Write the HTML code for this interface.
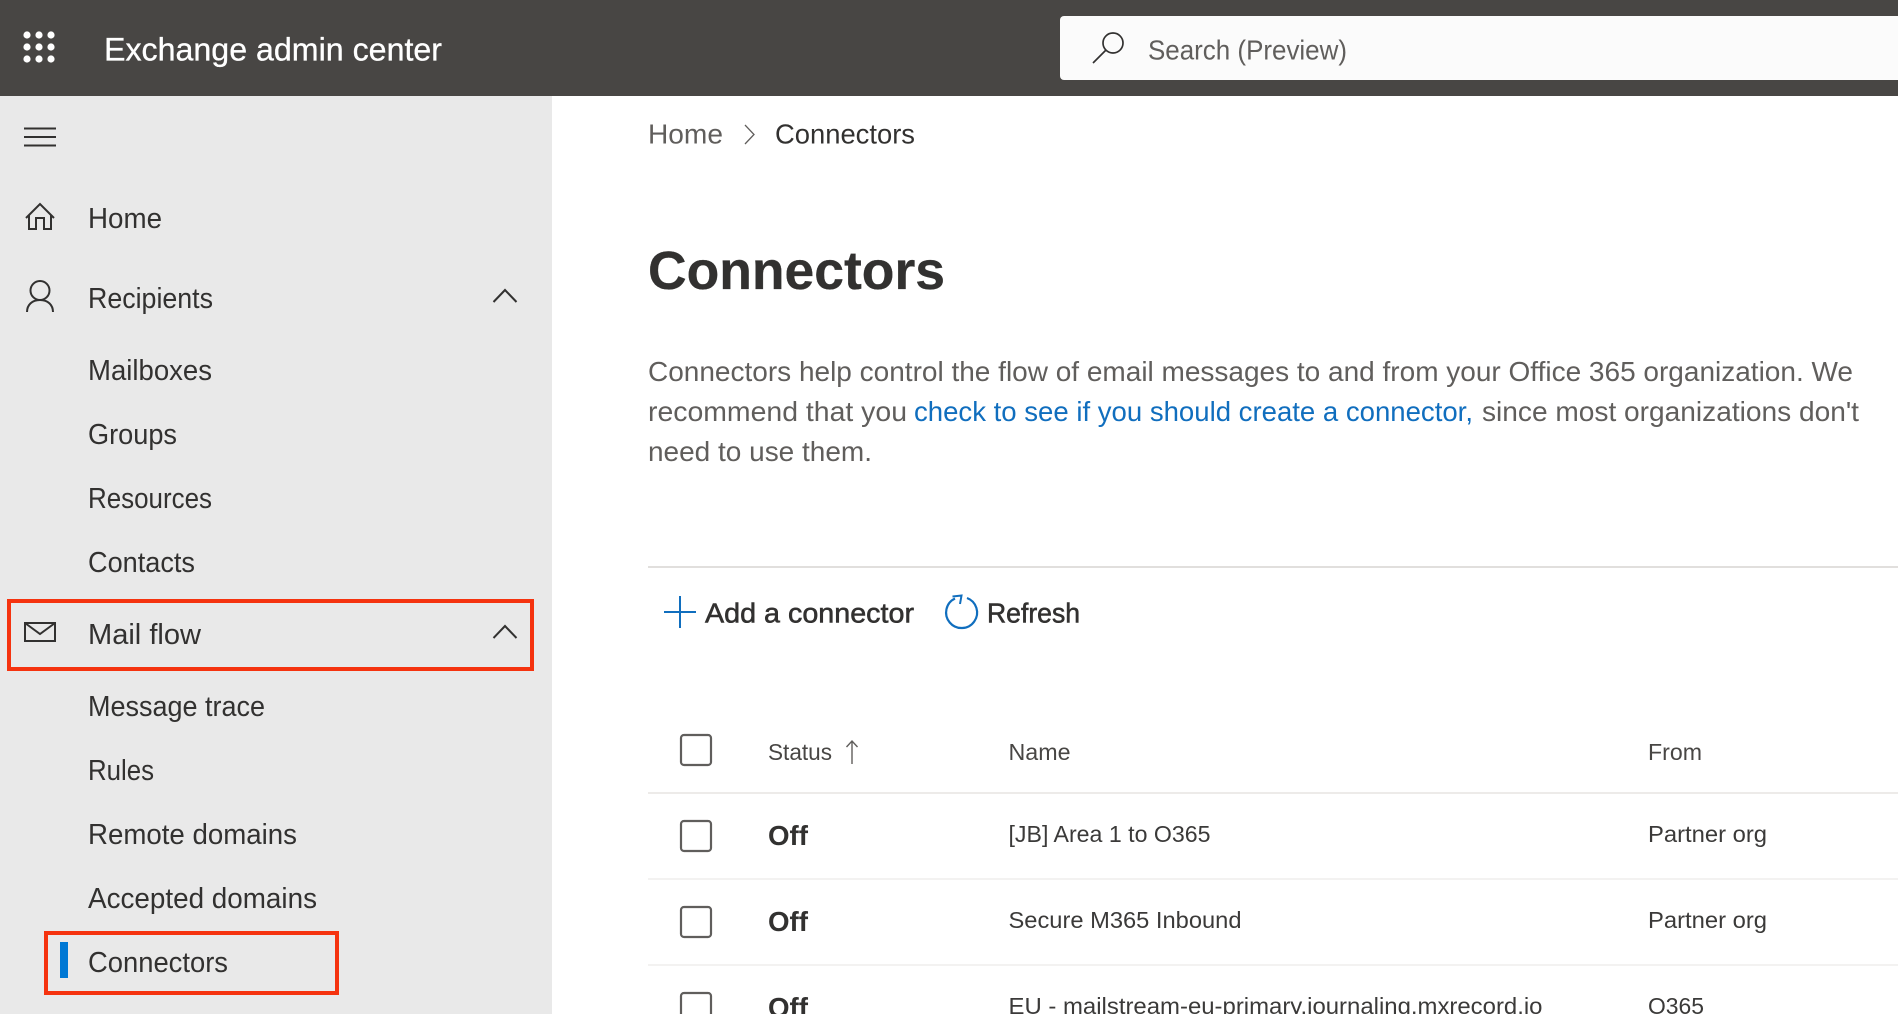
<!DOCTYPE html>
<html lang="en">
<head>
<meta charset="utf-8">
<title>Exchange admin center</title>
<style>
html,body{margin:0;padding:0;width:1898px;height:1014px;overflow:hidden;background:#fff}
svg{display:block}
text{font-family:"Liberation Sans",Arial,sans-serif;white-space:pre}
.nav{font-size:28.5px;fill:#323130}
.p{font-size:28px;fill:#605e5c}
.link{font-size:28px;fill:#106ebe}
.th{font-size:23.5px;fill:#484644}
.td{font-size:23.5px;fill:#3b3a39}
.off{font-size:28px;font-weight:bold;fill:#323130}
.semi{font-size:28px;fill:#323130;stroke:#323130;stroke-width:.55}
.ic{fill:none;stroke:#323130;stroke-width:2}
.cb{fill:#fff;stroke:#605e5c;stroke-width:2.2}
</style>
</head>
<body>
<svg width="1898" height="1014" viewBox="0 0 1898 1014" xmlns="http://www.w3.org/2000/svg">
<rect width="1898" height="1014" fill="#fff"/>
<rect x="0" y="96" width="552" height="918" fill="#e9e9e9"/>
<rect x="0" y="0" width="1898" height="96" fill="#484644"/>

<g fill="#fff">
<circle cx="27" cy="35" r="3.6"/><circle cx="39" cy="35" r="3.6"/><circle cx="51" cy="35" r="3.6"/>
<circle cx="27" cy="47" r="3.6"/><circle cx="39" cy="47" r="3.6"/><circle cx="51" cy="47" r="3.6"/>
<circle cx="27" cy="59" r="3.6"/><circle cx="39" cy="59" r="3.6"/><circle cx="51" cy="59" r="3.6"/>
</g>
<text x="104" y="60.5" font-size="32" fill="#fff" stroke="#fff" stroke-width=".3" textLength="338" lengthAdjust="spacingAndGlyphs">Exchange admin center</text>

<path d="M1064 16H1898V80H1064a4 4 0 0 1-4-4V20a4 4 0 0 1 4-4z" fill="#fbfbfb"/>
<circle cx="1113" cy="43" r="10" fill="none" stroke="#323130" stroke-width="1.700"/>
<path d="M1106 50L1093 63" fill="none" stroke="#323130" stroke-width="1.700"/>
<text x="1148" y="59.500" font-size="28" fill="#605e5c" textLength="199" lengthAdjust="spacingAndGlyphs">Search (Preview)</text>

<path class="ic" d="M24 128.500H56M24 137H56M24 145.500H56"/>
<path class="ic" d="M26 218L40 204L54 218M29 215V229H36V218H44V229H51V215"/>
<circle class="ic" cx="40" cy="290.500" r="9.500"/>
<path class="ic" d="M27 312C27 305 32 300 40 300C48 300 53 305 53 312"/>
<path class="ic" d="M493.500 302L505 290L516.500 302"/>
<rect class="ic" x="25" y="623" width="30" height="18"/>
<path class="ic" d="M25 623L40 634L55 623"/>
<path class="ic" d="M493.500 638L505 626L516.500 638"/>

<text class="nav" x="88" y="228" textLength="74" lengthAdjust="spacingAndGlyphs">Home</text>
<text class="nav" x="88" y="308" textLength="125" lengthAdjust="spacingAndGlyphs">Recipients</text>
<text class="nav" x="88" y="380" textLength="124" lengthAdjust="spacingAndGlyphs">Mailboxes</text>
<text class="nav" x="88" y="444" textLength="89" lengthAdjust="spacingAndGlyphs">Groups</text>
<text class="nav" x="88" y="508" textLength="124" lengthAdjust="spacingAndGlyphs">Resources</text>
<text class="nav" x="88" y="572" textLength="107" lengthAdjust="spacingAndGlyphs">Contacts</text>
<text class="nav" x="88" y="644" textLength="113" lengthAdjust="spacingAndGlyphs">Mail flow</text>
<text class="nav" x="88" y="716" textLength="177" lengthAdjust="spacingAndGlyphs">Message trace</text>
<text class="nav" x="88" y="780" textLength="66" lengthAdjust="spacingAndGlyphs">Rules</text>
<text class="nav" x="88" y="844" textLength="209" lengthAdjust="spacingAndGlyphs">Remote domains</text>
<text class="nav" x="88" y="908" textLength="229" lengthAdjust="spacingAndGlyphs">Accepted domains</text>
<text class="nav" x="88" y="972" textLength="140" lengthAdjust="spacingAndGlyphs">Connectors</text>

<rect x="60" y="942" width="8" height="36" fill="#0078d4"/>
<rect x="9" y="601" width="523" height="68" fill="none" stroke="#f5330f" stroke-width="4"/>
<rect x="46" y="933" width="291" height="60" fill="none" stroke="#f5330f" stroke-width="4"/>

<text x="648" y="143.500" font-size="28" fill="#605e5c" textLength="75" lengthAdjust="spacingAndGlyphs">Home</text>
<path d="M745 125L754 134.500L745 144" fill="none" stroke="#605e5c" stroke-width="1.300"/>
<text x="775" y="143.500" font-size="28" fill="#323130" textLength="140" lengthAdjust="spacingAndGlyphs">Connectors</text>

<text x="648" y="289" font-size="54" font-weight="bold" fill="#323130" stroke="#323130" stroke-width=".3" textLength="297" lengthAdjust="spacingAndGlyphs">Connectors</text>

<text class="p" x="648" y="381" textLength="1205" lengthAdjust="spacingAndGlyphs">Connectors help control the flow of email messages to and from your Office 365 organization. We</text>
<text class="p" x="648" y="421" textLength="259" lengthAdjust="spacingAndGlyphs">recommend that you</text>
<text class="link" x="914" y="421" textLength="559" lengthAdjust="spacingAndGlyphs">check to see if you should create a connector,</text>
<text class="p" x="1482" y="421" textLength="377" lengthAdjust="spacingAndGlyphs">since most organizations don't</text>
<text class="p" x="648" y="461" textLength="224" lengthAdjust="spacingAndGlyphs">need to use them.</text>

<rect x="648" y="566" width="1250" height="2" fill="#e1dfdd"/>

<path d="M680 596V628M664 612H696" fill="none" stroke="#106ebe" stroke-width="2"/>
<text class="semi" x="705" y="622.500" textLength="209" lengthAdjust="spacingAndGlyphs">Add a connector</text>
<path d="M967 598A15.500 15.500 0 1 1 955 598.500" fill="none" stroke="#106ebe" stroke-width="2.200"/>
<path d="M952.500 596.500L961.500 595.500L960 604" fill="none" stroke="#106ebe" stroke-width="2"/>
<text class="semi" x="987" y="622.500" textLength="93" lengthAdjust="spacingAndGlyphs">Refresh</text>

<rect class="cb" x="681" y="735" width="30" height="30" rx="3"/>
<text class="th" x="768" y="760" textLength="64" lengthAdjust="spacingAndGlyphs">Status</text>
<path d="M852 764V741M846.500 747L852 741L857.500 747" fill="none" stroke="#605e5c" stroke-width="1.400"/>
<text class="th" x="1008.500" y="760" textLength="62" lengthAdjust="spacingAndGlyphs">Name</text>
<text class="th" x="1648" y="760" textLength="54" lengthAdjust="spacingAndGlyphs">From</text>
<rect x="648" y="792" width="1250" height="2" fill="#edebe9"/>

<rect class="cb" x="681" y="821" width="30" height="30" rx="3"/>
<text class="off" x="768" y="845" textLength="40" lengthAdjust="spacingAndGlyphs">Off</text>
<text class="td" x="1008.500" y="842" textLength="202" lengthAdjust="spacingAndGlyphs">[JB] Area 1 to O365</text>
<text class="td" x="1648" y="842" textLength="119" lengthAdjust="spacingAndGlyphs">Partner org</text>
<rect x="648" y="878" width="1250" height="2" fill="#f3f2f1"/>

<rect class="cb" x="681" y="907" width="30" height="30" rx="3"/>
<text class="off" x="768" y="931" textLength="40" lengthAdjust="spacingAndGlyphs">Off</text>
<text class="td" x="1008.500" y="928" textLength="233" lengthAdjust="spacingAndGlyphs">Secure M365 Inbound</text>
<text class="td" x="1648" y="928" textLength="119" lengthAdjust="spacingAndGlyphs">Partner org</text>
<rect x="648" y="964" width="1250" height="2" fill="#f3f2f1"/>

<rect class="cb" x="681" y="993" width="30" height="30" rx="3"/>
<text class="off" x="768" y="1017" textLength="40" lengthAdjust="spacingAndGlyphs">Off</text>
<text class="td" x="1008.500" y="1014" textLength="534" lengthAdjust="spacingAndGlyphs">EU - mailstream-eu-primary.journaling.mxrecord.io</text>
<text class="td" x="1648" y="1014" textLength="56" lengthAdjust="spacingAndGlyphs">O365</text>
</svg>
</body>
</html>
